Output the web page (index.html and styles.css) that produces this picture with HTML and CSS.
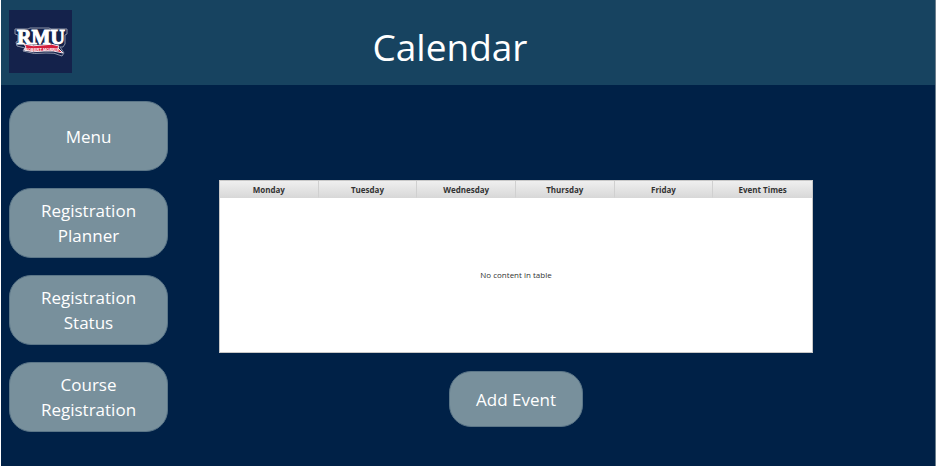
FILE: index.html
```html
<!DOCTYPE html>
<html lang="en">
<head>
<meta charset="utf-8">
<title>Calendar</title>
<link rel="stylesheet" href="styles.css">
</head>
<body>
<header class="header">
  <svg class="logo" viewBox="0 0 63 63" role="img" aria-label="RMU Robert Morris">
    <rect width="63" height="63" fill="#14224b"/>
    <path d="M6 19H19L21 18H40L42 19H58V24L56 25V34L54 37L51 37L55 43L53 46Q45 42 37 43Q25 45 14 41L16 38L8 36L7 32L9 31V25L6 24Z" fill="#14224b" stroke="#8b93a8" stroke-width="1"/>
    <path d="M15 34Q24 37 34 35Q43 33 50 36L49 38L54 43Q44 40 35 41Q24 43 15 40L17 37Z" fill="#d31f3c" stroke="#f2e9ee" stroke-width="1"/>
    <text class="logo-name" x="32" y="34" text-anchor="middle">RMU</text>
    <text class="logo-motto" x="33" y="41" text-anchor="middle">ROBERT MORRIS</text>
  </svg>
  <h1 class="title">Calendar</h1>
</header>
<div class="body">
  <nav class="sidebar">
    <button class="button" type="button">Menu</button>
    <button class="button" type="button">Registration Planner</button>
    <button class="button" type="button">Registration Status</button>
    <button class="button" type="button">Course Registration</button>
  </nav>
  <main class="main">
    <table class="events">
      <thead>
        <tr><th>Monday</th><th>Tuesday</th><th>Wednesday</th><th>Thursday</th><th>Friday</th><th>Event Times</th></tr>
      </thead>
      <tbody>
        <tr><td colspan="6">No content in table</td></tr>
      </tbody>
    </table>
    <button class="button button-add" type="button">Add Event</button>
  </main>
</div>
</body>
</html>
```
FILE: styles.css
```css
* {
  box-sizing: border-box;
}

body {
  margin: 0;
  min-height: 100vh;
  border-left: 1px solid #ffffff;
  border-right: 1px solid #6b7f8e;
  background: #002147;
  color: #ffffff;
  font-family: "Open Sans", "Noto Sans", sans-serif;
}

.header {
  display: grid;
  grid-template-columns: 64px 1fr 100px;
  align-items: center;
  height: 85px;
  padding: 0 8px 2px;
  background: #174360;
}

.logo {
  display: block;
  width: 63px;
  height: 63px;
}

.logo-name {
  fill: #ffffff;
  font: bold 20px "Liberation Serif", serif;
  stroke: #ffffff;
  stroke-width: 1px;
}

.logo-motto {
  fill: #ffffff;
  font: bold 4px "Liberation Sans", sans-serif;
}

.title {
  margin: 0;
  padding-top: 10px;
  font-size: 37px;
  font-weight: 400;
  line-height: 52px;
  text-align: center;
}

.body {
  display: flex;
  padding: 16px 8px;
}

.sidebar {
  display: flex;
  flex: none;
  flex-direction: column;
  gap: 17px;
  width: 159px;
}

.button {
  min-height: 70px;
  padding: 8px 24px;
  border: 1px solid #5b7688;
  border-radius: 22px;
  background: #78909c;
  color: #ffffff;
  font-family: inherit;
  font-size: 17px;
  line-height: 25px;
}

.main {
  display: flex;
  flex: 1;
  flex-direction: column;
  align-items: center;
  gap: 18px;
  padding: 79px 114px 0 51px;
}

.events {
  width: 100%;
  border: 1px solid #c8c8c8;
  border-spacing: 0;
  background: #ffffff;
  color: #333333;
  font-size: 8px;
  line-height: 12px;
  table-layout: fixed;
}

.events th {
  height: 17px;
  padding: 3px 0 1px;
  border-right: 1px solid #d0d0d0;
  border-bottom: 1px solid #d8d8d8;
  background: linear-gradient(#efefef, #d9d9d9);
  font-weight: 700;
}

.events th:last-child {
  border-right: 0;
}

.events td {
  height: 154px;
  padding: 0;
  text-align: center;
}

.button-add {
  min-height: 56px;
  padding: 8px 26px;
}
```
